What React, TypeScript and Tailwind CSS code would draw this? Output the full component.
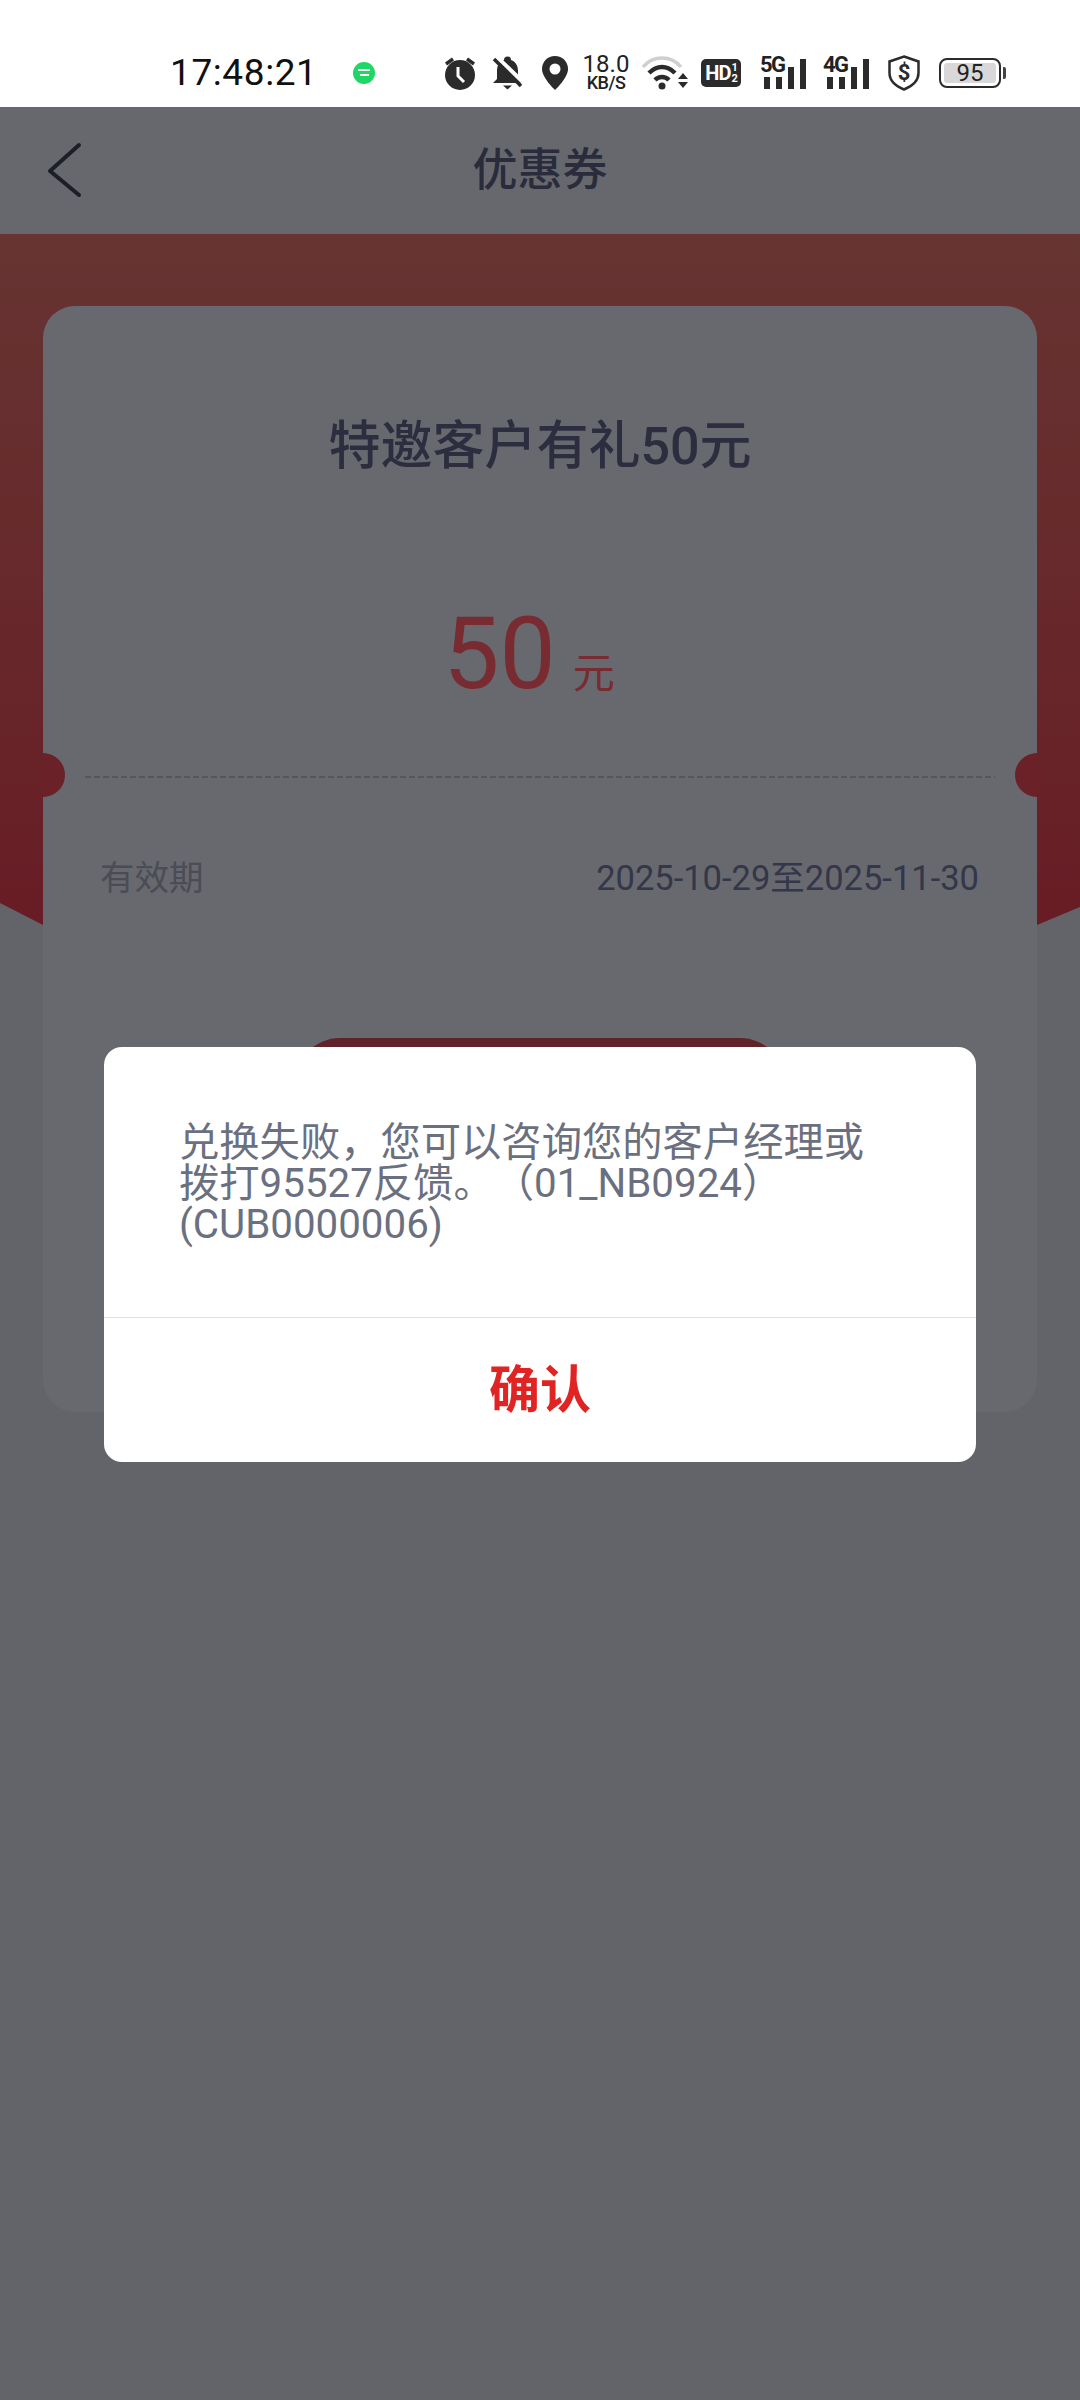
import React from 'react';

const Alarm = () => (
  <svg width="32" height="34" viewBox="0 0 32 34" className="shrink-0">
    <circle cx="16" cy="19" r="15" fill="#2b2b2b" />
    <path d="M14 11v9l6 6" fill="none" stroke="#fff" strokeWidth="3" />
    <path d="M2 8l7-5M30 8l-7-5" stroke="#2b2b2b" strokeWidth="3.500" />
  </svg>
);

const BellOff = () => (
  <svg width="31" height="34" viewBox="0 0 31 34" className="shrink-0">
    <path d="M12 4a3.500 3.500 0 0 1 7 0c5 2 7 6 7 11v8l4 4H1l4-4v-8c0-5 2-9 7-11z" fill="#2b2b2b" />
    <path d="M11 29.500h9l-4.500 4z" fill="#2b2b2b" />
    <path d="M5 1l29 28" stroke="#fff" strokeWidth="4" />
    <path d="M2 3l27 27" stroke="#2b2b2b" strokeWidth="3.500" />
  </svg>
);

const Pin = () => (
  <svg width="28" height="36" viewBox="0 0 28 36" className="shrink-0">
    <path d="M14 1C6.500 1 1 6.800 1 14c0 9 13 21 13 21s13-12 13-21C27 6.800 21.500 1 14 1z" fill="#2b2b2b" />
    <circle cx="14" cy="14" r="5.500" fill="#fff" />
  </svg>
);

const Wifi = () => (
  <svg width="46" height="34" viewBox="0 0 46 34" className="shrink-0">
    <path d="M1 11C11 -1 29 -1 39 11" fill="none" stroke="#cfcfcf" strokeWidth="3.500" />
    <path d="M7 17c8-8 18-8 26 0" fill="none" stroke="#2b2b2b" strokeWidth="4.500" />
    <path d="M13 24c4-4 10-4 14 0" fill="none" stroke="#2b2b2b" strokeWidth="4.500" />
    <circle cx="20" cy="30" r="3.500" fill="#2b2b2b" />
    <path d="M36 23l5-6 5 6zM36 26h10l-5 6z" fill="#2b2b2b" />
  </svg>
);

// signal bars with the network label sitting over the two short ones
const Signal = ({ label }: { label: string }) => (
  <div className="relative h-[32px] w-[46px] shrink-0">
    <span className="absolute left-0 top-[-3px] text-[22px] leading-[22px] font-bold tracking-[-1.500px] text-[#222]">{label}</span>
    <div className="absolute inset-0 flex items-end justify-end gap-[6px]">
      <div className="h-[12px] w-[6px] bg-[#2b2b2b]" />
      <div className="h-[12px] w-[6px] bg-[#2b2b2b]" />
      <div className="h-[22px] w-[6px] bg-[#2b2b2b]" />
      <div className="h-[30px] w-[6px] bg-[#2b2b2b]" />
    </div>
  </div>
);

const Shield = () => (
  <svg width="32" height="36" viewBox="0 0 32 36" className="shrink-0">
    <path d="M16 1.500L30.500 6.500V18c0 8-6 13-14.500 16.500C7.500 31 1.500 26 1.500 18V6.500z" fill="none" stroke="#2b2b2b" strokeWidth="2.500" />
    <text x="16" y="25" textAnchor="middle" fontSize="22" fontWeight="700" fill="#2b2b2b" fontFamily="Roboto">$</text>
  </svg>
);

export default function App() {
  return (
    <div className="relative h-[2400px] w-[1080px] overflow-hidden bg-[#636469] font-['Roboto','Noto_Sans_CJK_SC',sans-serif]">
      {/* status bar */}
      <div className="flex h-[107px] items-center bg-white pl-[170px] pt-[38px]">
        <span className="w-[146px] text-[37px] leading-none tracking-[0.6px] text-[#111]">17:48:21</span>
        <div className="ml-[37px] flex h-[22px] w-[22px] flex-col items-center justify-center gap-[3px] rounded-full bg-[#1fd765]">
          <div className="h-[2px] w-[12px] bg-white" />
          <div className="h-[2px] w-[9px] bg-white" />
        </div>
        <div className="ml-[69px] flex items-center">
          <Alarm />
          <div className="ml-[16px]"><BellOff /></div>
          <div className="ml-[18px]"><Pin /></div>
          <div className="ml-[13px] flex w-[48px] flex-col items-center text-[#222]">
            <span className="text-[24px] leading-[20px]">18.0</span>
            <span className="text-[18px] leading-[17px] font-medium tracking-[-0.5px]">KB/S</span>
          </div>
          <div className="ml-[12px]"><Wifi /></div>
          <div className="ml-[13px] flex h-[28px] w-[40px] items-center justify-center rounded-[5px] bg-[#2b2b2b] text-[20px] leading-none font-bold tracking-[-1px] text-white">
            HD<span className="ml-[1px] flex flex-col text-[11px] leading-[11px]"><span>1</span><span>2</span></span>
          </div>
          <div className="ml-[19px]"><Signal label="5G" /></div>
          <div className="ml-[17px]"><Signal label="4G" /></div>
          <div className="ml-[19px]"><Shield /></div>
          <div className="ml-[19px] flex items-center">
            <div className="flex h-[30px] w-[62px] items-center rounded-[8px] border-2 border-[#2b2b2b] p-[3px]">
              <div className="flex h-full w-[52px] items-center justify-center rounded-[3px] bg-[#d8d8d8] text-[24px] leading-none text-[#222]">95</div>
            </div>
            <div className="ml-[2px] h-[12px] w-[3px] rounded-r-[2px] bg-[#444]" />
          </div>
        </div>
      </div>

      {/* nav bar */}
      <div className="relative flex h-[127px] items-center justify-center bg-[#66686d]">
        <svg width="36" height="56" viewBox="0 0 36 56" className="absolute left-[46px] top-[35px]">
          <path d="M33 3L4 29l29 24" fill="none" stroke="#1d1f26" strokeWidth="4" strokeLinecap="round" strokeLinejoin="round" />
        </svg>
        <span className="text-[45px] leading-none font-medium text-[#2a2c3c]">优惠券</span>
      </div>

      {/* coupon */}
      <div className="relative pt-[72px]">
        <div className="absolute inset-x-0 top-0 h-[691px] bg-gradient-to-b from-[#663432] to-[#681c25] [clip-path:polygon(0_0,100%_0,100%_673px,1037px_691px,43px_691px,0_669px)]" />
        <div className="relative mx-[43px] flex h-[1106px] flex-col rounded-[32px] bg-[#67696e]">
          <div className="absolute left-[-22px] top-[447px] h-[44px] w-[44px] rounded-full bg-[#6a2128] [clip-path:inset(0_0_0_50%)]" />
          <div className="absolute right-[-22px] top-[447px] h-[44px] w-[44px] rounded-full bg-[#6a2128] [clip-path:inset(0_50%_0_0)]" />

          <div className="mt-[111px] text-center text-[52px] leading-[60px] font-medium text-[#2c2e40]">特邀客户有礼50元</div>
          <div className="mt-[122px] flex items-baseline justify-center gap-[17px] pr-[22px] text-[#782b30]">
            <span className="text-[100px] leading-[110px]">50</span>
            <span className="text-[42px] leading-none">元</span>
          </div>
          <div className="mx-[42px] mt-[67px] h-[2px] bg-[repeating-linear-gradient(90deg,#55565c_0,#55565c_6px,transparent_6px,transparent_9px)]" />
          <div className="mt-[78px] flex items-center justify-between pl-[57px] pr-[58px]">
            <span className="text-[34.5px] leading-[44px] text-[#4b4c55]">有效期</span>
            <span className="text-[34.5px] leading-[44px] text-[#34364a]">2025-10-29至2025-11-30</span>
          </div>
          <div className="mx-auto mt-[138px] h-[90px] w-[490px] rounded-full bg-[#5f2329]" />
        </div>
      </div>

      {/* dialog */}
      <div className="absolute left-[104px] top-[1047px] flex h-[415px] w-[872px] flex-col overflow-hidden rounded-[18px] bg-white">
        <div className="flex h-[270px] flex-col px-[75px] pt-[75px] text-[40.3px] leading-[41px] text-[#6b7080] [text-spacing-trim:space-all]">
          <p>兑换失败，您可以咨询您的客户经理或</p>
          <p>拨打95527反馈。（01_NB0924）</p>
          <p>(CUB0000006)</p>
        </div>
        <div className="h-[1px] bg-[#dfdfdf]" />
        <div className="flex flex-1 items-center justify-center text-[51px] leading-none font-bold text-[#e02424]">确认</div>
      </div>
    </div>
  );
}
